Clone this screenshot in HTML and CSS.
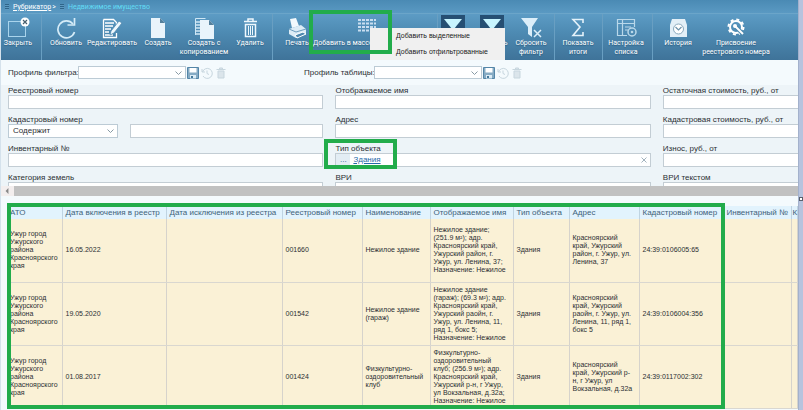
FILE: index.html
```html
<!DOCTYPE html>
<html lang="ru">
<head>
<meta charset="utf-8">
<title>Недвижимое имущество</title>
<link rel="stylesheet" href="styles.css">
</head>
<body>
<div class="window">
<main class="app">
  <header class="top">
    <nav class="crumbs">
      <span class="grip"></span><a href="#">Рубрикатор</a><span class="gt">&gt;</span>
      <span class="grip"></span><span class="current">Недвижимое имущество</span>
    </nav>
    <div class="toolbar">
      <div class="group g-close">
        <button class="tool"><svg viewBox="0 0 24 22"><rect x="2.500" y="4.500" width="17" height="15" fill="none" stroke="#a9d4ec"/><circle cx="19" cy="5" r="4.500" fill="#fff"/><path d="M17 3l4 4M21 3l-4 4" stroke="#47606f" stroke-width="1.200"/></svg>Закрыть</button>
      </div>
      <div class="group g-edit">
        <button class="tool"><svg viewBox="0 0 24 22"><path d="M19 7A8.500 8.500 0 1 0 20.500 15" fill="none" stroke="#d5ecf8" stroke-width="1.700"/><path d="M20.500 1v7h-7" fill="none" stroke="#d5ecf8" stroke-width="1.700"/></svg>Обновить</button>
        <button class="tool"><svg viewBox="0 0 24 22"><path d="M3.500 2.500h10l3 3v4M16.500 16v4.500h-13v-18" fill="none" stroke="#fff" stroke-width="1.300"/><path d="M5 6h9M5 9h8M5 12h6M5 15h4M5 18h8" stroke="#fff" stroke-width="1.500"/><path d="M10 18l1-4 8-10 3 2-8 10z" fill="#eef8fd" stroke="#4d87ae" stroke-width=".8"/></svg>Редактировать</button>
        <button class="tool"><svg viewBox="0 0 24 22"><path d="M5 1h9l5 5v15H5z" fill="#e9f4fb"/><path d="M14 1v5h5z" fill="#54809c"/></svg>Создать</button>
        <button class="tool"><svg viewBox="0 0 24 22"><path d="M3.500 18V1.500h10" fill="none" stroke="#cfe7f5"/><path d="M4 5h5M4 8h5M4 11h5M4 14h5M4 17h5" stroke="#cfe7f5" stroke-width="1.300"/><path d="M8 3h9l5 5v14H8z" fill="#e9f4fb"/><path d="M17 3v5h5z" fill="#54809c"/></svg>Создать с копированием</button>
        <button class="tool"><svg viewBox="0 0 24 22"><path d="M6 4.500h13M10 4V2h5v2M7.500 7.500h10v12h-10z" fill="none" stroke="#eef8fd" stroke-width="1.500"/><path d="M10.500 9v9M12.500 9v9M14.500 9v9" stroke="#eef8fd"/></svg>Удалить</button>
      </div>
      <div class="group g-print">
        <button class="tool"><svg viewBox="0 0 24 22"><path d="M5 2l6-1 3 8-7 2z" fill="#f2f9fd"/><path d="M4 12l12-4 5 4v5l-10 4-7-4z" fill="#dcecf6"/><path d="M4 12l7 3 10-3" fill="none" stroke="#6d9dbd"/><path d="M10 18l8-3 3 2-9 4z" fill="#4e88af" stroke="#fff"/></svg>Печать</button>
        <button class="tool wide"><svg viewBox="0 0 24 22"><path d="M3 3h18M3 6.500h18M3 10h18M3 13.500h18" stroke="#c9def0" stroke-width="2" stroke-dasharray="3 1"/></svg>Добавить в массовую операцию</button>
      </div>
      <div class="group g-filter">
        <button class="tool pressed" aria-label="Фильтр"><svg viewBox="0 0 24 22"><path d="M3 3h18l-8 10h-2z" fill="#c8f5ff"/></svg></button>
        <button class="tool pressed"><svg viewBox="0 0 24 22"><path d="M3 3h18l-8 10h-2z" fill="#c8f5ff"/></svg>Очистить</button>
        <button class="tool"><svg viewBox="0 0 24 22"><path d="M2 1h17l-6 9v10l-4-3v-7z" fill="#dceef9"/><path d="M15 13l7 7M22 13l-7 7" stroke="#dceef9" stroke-width="1.500"/></svg>Сбросить фильтр</button>
      </div>
      <div class="group g-total">
        <button class="tool"><svg viewBox="0 0 24 22"><path d="M17 6V2.500H7L14 10 7 18.500h10V15" fill="none" stroke="#e4f2fa" stroke-width="1.600"/></svg>Показать итоги</button>
      </div>
      <div class="group g-setup">
        <button class="tool"><svg viewBox="0 0 24 22"><path d="M13 18.500H3.500v-16h17V10M3 6.500h17M8.500 3v15M11 10h6M11 13h3" fill="none" stroke="#b9d8ea" stroke-width="1.200"/><circle cx="18" cy="15" r="4" fill="none" stroke="#b9d8ea" stroke-width="1.500"/><circle cx="18" cy="15" r="1.300" fill="#b9d8ea"/></svg>Настройка списка</button>
      </div>
      <div class="group g-history">
        <button class="tool"><svg viewBox="0 0 24 22"><path d="M6 2h13l2 6v12H4V8z" fill="#e3eff7"/><circle cx="12.500" cy="12" r="5" fill="#fff" stroke="#8aa9bd"/><path d="M9.500 10l3 3 3-3" fill="none" stroke="#6e93ab" stroke-width="1.200"/></svg>История</button>
        <button class="tool assign"><svg viewBox="0 0 24 22"><circle cx="12" cy="10" r="6" fill="none" stroke="#fff" stroke-width="2"/><circle cx="12" cy="10" r="7.500" fill="none" stroke="#fff" stroke-width="2" stroke-dasharray="3 2.900"/><path d="M12 10l8 8" stroke="#4d88ae" stroke-width="4"/><path d="M11 9l8 8" stroke="#fff" stroke-width="2"/><circle cx="11" cy="9" r="2" fill="#fff"/></svg>Присвоение<br>реестрового номера</button>
      </div>
    </div>
    <div class="menu" role="menu">
      <button role="menuitem">Добавить выделенные</button>
      <button role="menuitem">Добавить отфильтрованные</button>
    </div>
    <div class="mark mark-tool"></div>
  </header>

  <section class="profiles">
    <div class="profile">
      <label for="pf">Профиль фильтра:</label>
      <select id="pf"><option></option></select>
      <button class="mini" aria-label="Сохранить"><svg viewBox="0 0 12 12"><path d="M.500.500h11v11h-11z" fill="#86abc4" stroke="#5486a8"/><path d="M2.500 1h7v4.500h-7z" fill="#fff"/><path d="M3 8h6v3.500H3z" fill="#dcecf5"/><path d="M4 9h2v2H4z" fill="#44789b"/></svg></button>
      <button class="mini dim" aria-label="Восстановить"><svg viewBox="0 0 12 12"><path d="M1 2v3h3M1.500 5a5 5 0 1 1 .500 4M6 3.500v3l2 1" fill="none" stroke="#9bb3c1"/></svg></button>
      <button class="mini dim" aria-label="Удалить профиль"><svg viewBox="0 0 12 12"><path d="M1.500 2.500h9M4.500 2V1h3v1M3 4h6v7H3z" fill="#c3d1da" stroke="#9bb3c1"/></svg></button>
    </div>
    <div class="profile">
      <label for="pt">Профиль таблицы:</label>
      <select id="pt"><option></option></select>
      <button class="mini" aria-label="Сохранить"><svg viewBox="0 0 12 12"><path d="M.500.500h11v11h-11z" fill="#86abc4" stroke="#5486a8"/><path d="M2.500 1h7v4.500h-7z" fill="#fff"/><path d="M3 8h6v3.500H3z" fill="#dcecf5"/><path d="M4 9h2v2H4z" fill="#44789b"/></svg></button>
      <button class="mini dim" aria-label="Восстановить"><svg viewBox="0 0 12 12"><path d="M1 2v3h3M1.500 5a5 5 0 1 1 .500 4M6 3.500v3l2 1" fill="none" stroke="#9bb3c1"/></svg></button>
      <button class="mini dim" aria-label="Удалить профиль"><svg viewBox="0 0 12 12"><path d="M1.500 2.500h9M4.500 2V1h3v1M3 4h6v7H3z" fill="#c3d1da" stroke="#9bb3c1"/></svg></button>
    </div>
  </section>

  <form class="filters">
    <div class="field"><label for="f1">Реестровый номер</label><input id="f1"></div>
    <div class="field"><label for="f2">Отображаемое имя</label><input id="f2"></div>
    <div class="field last"><label for="f3">Остаточная стоимость, руб., от</label><input id="f3"></div>
    <div class="field"><label for="f4">Кадастровый номер</label>
      <div class="pair"><select aria-label="Условие"><option>Содержит</option></select><input id="f4"></div></div>
    <div class="field"><label for="f5">Адрес</label><input id="f5"></div>
    <div class="field last"><label for="f6">Кадастровая стоимость, руб., от</label><input id="f6"></div>
    <div class="field"><label for="f7">Инвентарный №</label><input id="f7"></div>
    <div class="field marked"><label for="f8">Тип объекта</label>
      <div class="picker"><button type="button" id="f8">...</button><a href="#">Здания</a><button type="button" class="clear" aria-label="Очистить"><svg viewBox="0 0 6 6"><path d="M.500.500l5 5M5.500.500l-5 5" stroke="#8ca0ad" stroke-width=".8"/></svg></button></div>
      <div class="mark mark-type"></div></div>
    <div class="field last"><label for="f9">Износ, руб., от</label><input id="f9"></div>
    <div class="field"><label for="f10">Категория земель</label><input id="f10"></div>
    <div class="field"><label for="f11">ВРИ</label><input id="f11"></div>
    <div class="field last"><label for="f12">ВРИ текстом</label><input id="f12"></div>
  </form>

  <div class="hscroll"><span class="arrow"></span><span class="thumb"></span></div>

  <section class="grid">
    <table>
      <colgroup><col class="c1"><col class="c2"><col class="c3"><col class="c4"><col class="c5"><col class="c6"><col class="c7"><col class="c8"><col class="c9"><col class="c10"><col></colgroup>
      <thead><tr><th>АТО</th><th>Дата включения в реестр</th><th>Дата исключения из реестра</th><th>Реестровый номер</th><th>Наименование</th><th>Отображаемое имя</th><th>Тип объекта</th><th>Адрес</th><th>Кадастровый номер</th><th>Инвентарный №</th><th>К</th></tr></thead>
      <tbody>
        <tr><td>Ужур город<br>Ужурского<br>района<br>Красноярского<br>края</td><td>16.05.2022</td><td></td><td>001660</td><td>Нежилое здание</td><td>Нежилое здание;<br>(251.9 м²); адр.<br>Красноярский край,<br>Ужурский район, г.<br>Ужур, ул. Ленина, 37;<br>Назначение: Нежилое</td><td>Здания</td><td>Красноярский<br>край, Ужурский<br>район, г. Ужур, ул.<br>Ленина, 37</td><td>24:39:0106005:65</td><td></td><td></td></tr>
        <tr><td>Ужур город<br>Ужурского<br>района<br>Красноярского<br>края</td><td>19.05.2020</td><td></td><td>001542</td><td>Нежилое здание<br>(гараж)</td><td>Нежилое здание<br>(гараж); (69.3 м²); адр.<br>Красноярский край,<br>Ужурский раойн, г.<br>Ужур, ул. Ленина, 11,<br>ряд 1, бокс 5;<br>Назначение: Нежилое</td><td>Здания</td><td>Красноярский<br>край, Ужурский<br>раойн, г. Ужур, ул.<br>Ленина, 11, ряд 1,<br>бокс 5</td><td>24:39:0106004:356</td><td></td><td></td></tr>
        <tr><td>Ужур город<br>Ужурского<br>района<br>Красноярского<br>края</td><td>01.08.2017</td><td></td><td>001424</td><td>Физкультурно-<br>оздоровительный<br>клуб</td><td>Физкультурно-<br>оздоровительный<br>клуб; (256.9 м²); адр.<br>Красноярский край,<br>Ужурский р-н, г Ужур,<br>ул Вокзальная, д.32а;<br>Назначение: Нежилое</td><td>Здания</td><td>Красноярский<br>край, Ужурский р-<br>н, г Ужур, ул<br>Вокзальная, д.32а</td><td>24:39:0117002:302</td><td></td><td></td></tr>
      </tbody>
    </table>
    <div class="mark mark-grid"></div>
  </section>
</main>
<aside class="edge"><span class="handle"></span></aside>
</div>
</body>
</html>
```
FILE: styles.css
```css
* { box-sizing: border-box; }
body {
  margin: 0;
  font: 8px/10px "Liberation Sans", Arial, sans-serif;
  color: #2b2f33;
  background: #f4fafd;
}
button, input, select { font: inherit; color: inherit; margin: 0; padding: 0; border: 0; border-radius: 0; background: none; }
svg { display: block; }

.window { display: grid; grid-template-columns: minmax(0, 1fr) 5px; height: 100vh; overflow: hidden; }
.app { display: flex; flex-direction: column; min-width: 0; overflow: hidden; border-left: 1px solid #d5e2ec; }
.edge { background: #b7c3de; border-left: 1px solid #a3b1cc; padding-top: 197px; }
.handle { display: block; width: 4px; height: 4px; border: 1px solid #59616e; background: #fff; }

.top {
  position: relative;
  flex: none;
  height: 60px;
  font-family: Roboto, sans-serif;
  font-size: 7px;
  color: #fff;
  background: linear-gradient(#4a8ab4, #5c9bc4 24%, #4d8ab2 55%, #3f7399);
}
.crumbs { display: flex; align-items: center; gap: 4px; height: 14px; padding: 0 4px; border-bottom: 1px solid #6ba5c9; }
.crumbs a { color: #fff; }
.crumbs .gt { margin-left: -3px; }
.current { color: #62dcf5; }
.grip { width: 4px; height: 6px; background: repeating-linear-gradient(#2f658a 0 1px, #5d9ac1 1px 2px); }

.toolbar { display: flex; height: 46px; }
.group { display: flex; border-right: 1px solid #699fc2; flex: none; }
.group:last-child { border: 0; }
.tool {
  display: flex;
  flex-direction: column;
  align-items: center;
  width: 46px;
  line-height: 9px;
  padding-top: 3px;
  text-align: center;
  flex: none;
  text-shadow: 0 1px 1px #2e5f80;
}
.tool svg { width: 24px; height: 22px; flex: none; }
.g-close { width: 41px; }
.g-close .tool { width: 34px; }
.g-edit { width: 231px; padding-left: 1px; }
.g-print { width: 165px; }
.g-print .tool { width: 48px; }
.g-print .wide { width: 92px; white-space: nowrap; }
.g-filter { width: 117px; }
.g-filter .tool { width: 39px; padding-left: 1px; }
.g-filter .tool:first-child { width: 28px; margin-right: 6px; }
.g-filter .pressed { padding-top: 1px; }
.pressed svg { height: 24px; background: #264f73; }
.g-total { width: 48px; }
.g-setup { width: 50px; }
.g-history .tool { width: 50px; }
.g-history .assign { width: 66px; white-space: nowrap; }

.menu {
  position: absolute;
  left: 369px;
  top: 28px;
  width: 135px;
  display: flex;
  flex-direction: column;
  background: #f0f0f0;
  color: #222;
  font-family: "Liberation Sans", Arial, sans-serif;
}
.menu button { height: 16px; padding-left: 26px; text-align: left; white-space: nowrap; }

.mark { position: absolute; border: 4px solid #22ac4b; pointer-events: none; }
.mark-tool { left: 308px; top: 10px; width: 83px; height: 44px; }
.mark-type { left: -11px; top: -4px; width: 73px; height: 30px; }
.mark-grid { left: 0; top: 0; width: 718px; height: 206px; }

.profiles { display: flex; flex: none; height: 25px; padding: 6px 7px; }
.profile { display: flex; align-items: center; width: 296px; gap: 1px; }
.profile label { flex: none; width: 69px; white-space: nowrap; }
.profile select { width: 108px; height: 13px; }
select {
  appearance: none;
  border: 1px solid #bccbd5;
  padding: 0 4px;
  background: #fff url("data:image/svg+xml,%3Csvg xmlns='http://www.w3.org/2000/svg' viewBox='0 0 7 4'%3E%3Cpath d='M.5.5l3 3 3-3' fill='none' stroke='%23889aa5'/%3E%3C/svg%3E") no-repeat right 3px center / 7px 4px;
}
.mini { width: 13px; height: 12px; }
.mini svg { width: 12px; height: 12px; }
.dim { opacity: .5; }

.filters {
  display: grid;
  grid-template-columns: 7fr 7fr 3fr;
  column-gap: 12px;
  row-gap: 5px;
  flex: none;
  height: 101px;
  overflow: hidden;
  align-content: start;
  padding-left: 7px;
  background: #edf4f8;
}
.field { min-width: 0; }
.field label { display: block; height: 10px; line-height: 12px; white-space: nowrap; }
.field input { display: block; width: 100%; height: 14px; border: 1px solid #c3cdd4; background: #fff; }
.field.last input { border-right: 0; }
.pair { display: grid; grid-template-columns: 110px 1fr; gap: 12px; }
.pair select { height: 14px; }
.marked { position: relative; }
.picker { display: flex; align-items: center; height: 14px; border: 1px solid #c3cdd4; background: #fff; }
.picker button { width: 14px; height: 12px; background: #e3edf4; color: #2b6496; }
.picker a { color: #2669a8; margin-left: 3px; }
.picker .clear { margin-left: auto; width: 12px; padding: 3px; background: none; }

.hscroll { display: flex; align-items: center; flex: none; height: 10px; background: #f3eeee; }
.arrow { width: 13px; height: 6px; clip-path: polygon(35% 50%, 57% 0, 57% 100%); background: #888; }
.thumb { flex: 1; height: 10px; background: #c1c1c1; }

.grid { position: relative; flex: none; margin: 7px 0 0 6px; padding-top: 3px; }
table { width: 100%; table-layout: fixed; border-collapse: collapse; }
.c1 { width: 55px; }
.c2 { width: 104px; }
.c3 { width: 116px; }
.c4 { width: 80px; }
.c5 { width: 68px; }
.c6 { width: 83px; }
.c7 { width: 56px; }
.c8 { width: 70px; }
.c9 { width: 84px; }
.c10 { width: 68px; }
th, td { padding: 0 0 0 3px; text-align: left; white-space: nowrap; border-right: 1px solid #d6d3cc; }
th { height: 13px; font-weight: 400; color: #40627a; background: #e2f3fd; border-color: #bfd4e2; }
th:last-child { padding-left: 1px; }
td { height: 63px; font-size: 7px; line-height: 8px; background: #faf1d6; border-bottom: 1px solid #d9d7d0; vertical-align: middle; }
```
